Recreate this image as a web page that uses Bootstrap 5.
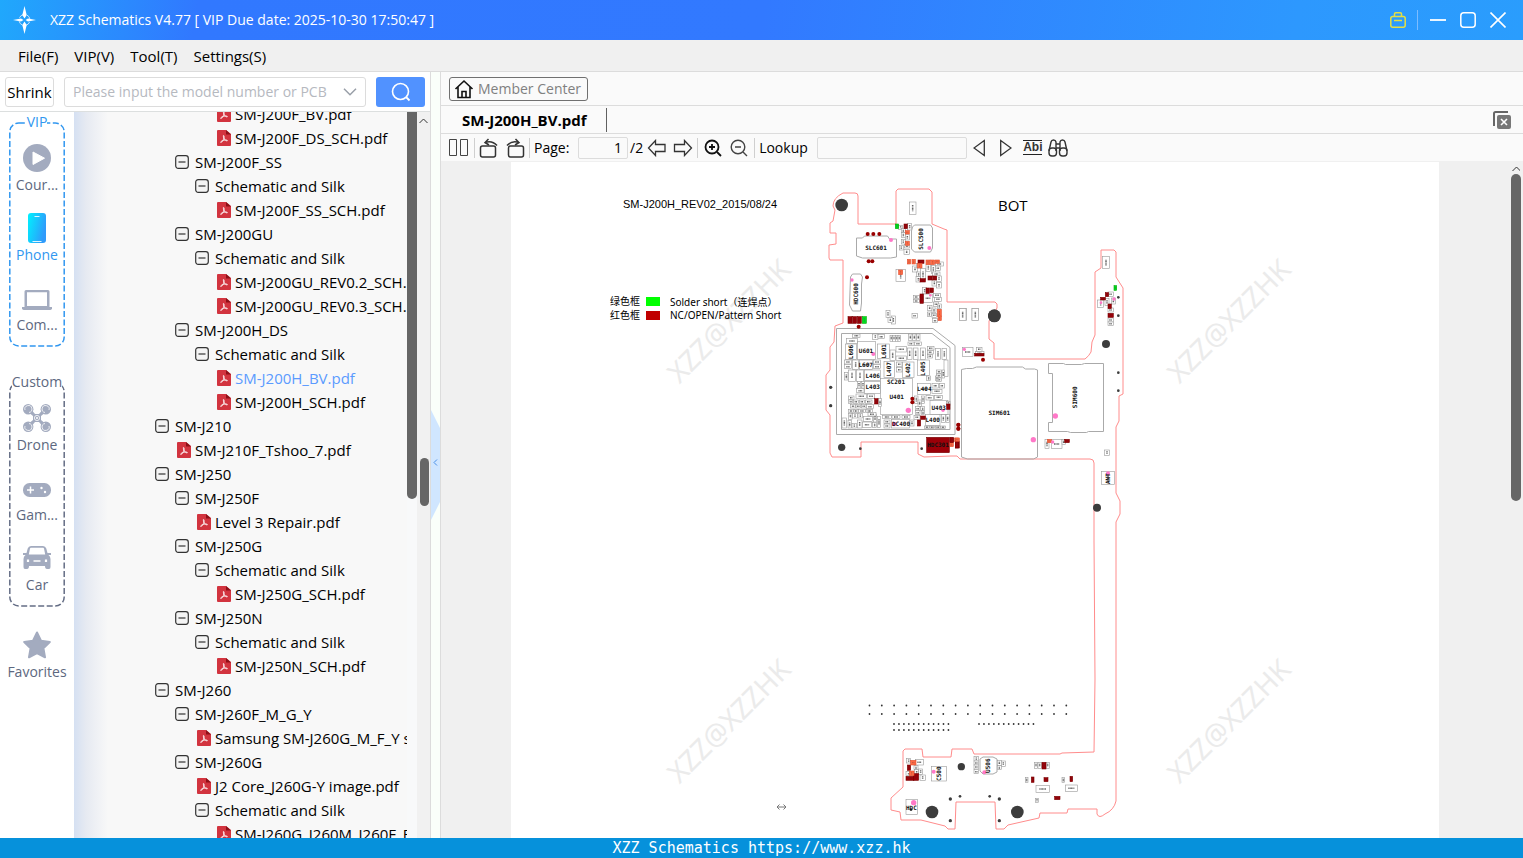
<!DOCTYPE html>
<html lang="en">
<head>
<meta charset="utf-8">
<meta name="viewport" content="width=device-width, initial-scale=1">
<title>XZZ Schematics</title>
<link href="https://cdn.jsdelivr.net/npm/bootstrap@5.3.0/dist/css/bootstrap.min.css" rel="stylesheet">
<style>
body{font-family:"Open Sans","Noto Sans","Noto Sans CJK SC",sans-serif;font-size:15px;line-height:24px;color:#000;background:#f0f0f0}
svg{display:block;flex:none}
button,input{font:inherit;color:inherit}
.plain{border:0;background:none;padding:0}
.titlebar{height:40px;background:linear-gradient(100deg,#20a8fc 0,#3178ff 13%,#3279ff 50%,#2d98fe 85%,#2a9dfd 100%);color:#fff;font-size:14px}
.wincontrols{gap:14px;padding:0 17px 0 12px;margin-left:11px;position:relative;border-left:0}
.menubar{height:32px;background:#f0f0f0;border-bottom:1px solid #dcdcdc;padding:0 18px;gap:16px}
.menubar a{color:#000;text-decoration:none}
.leftpane{width:431px;border-right:1px solid #dcdcdc}
.searchrow{height:40px;border-bottom:1px solid #dcdfdf;padding:0 5px}
.shrink{width:49px;height:30px;border:1px solid #dcdcdc;border-radius:3px;background:#fff;padding:0}
.combo{width:302px;height:30px;border:1px solid #dcdcdc;border-radius:3px;margin:0 10px}
.combo input{border:0;outline:0;background:none;min-width:0;padding:0 0 0 8px;font-size:14px}
.combo input::placeholder{color:#b6b9bf;opacity:1}
.find{width:49px;height:30px;background:#5192ff;border-radius:3px}
.sidenav{width:74px;background:#fff;color:#5d6880;padding:10px 9px 0;font-size:14px}
.group{position:relative;height:225px;padding-top:20px}
.group+.group{margin-top:35px}
.group .frame{position:absolute;inset:0;width:100%;height:100%}
.group-title{position:absolute;top:-12px;left:0;right:0;text-align:center}
.group-title span{background:#fff}
.vip{color:#3197f0}
.sidenav .item{position:relative;height:70px;display:flex;flex-direction:column;align-items:center;color:#5d6880;text-decoration:none;white-space:nowrap}
.item .glyph{height:31px;display:flex;align-items:center}
.sidenav .item.on{color:#3197f0}
.fav{padding-top:22px;margin:0 -9px}
.treebox{background:linear-gradient(90deg,#d5e0f2 0,#e6eaf2 12px,#f8f8f8 34px)}
.tree{margin:-10px 0 0;padding:0;list-style:none}
.tree li{height:24px;display:flex;align-items:center;white-space:nowrap;gap:6px}
.tree a{color:#000;text-decoration:none}
.tree .file{gap:4px}
.tree .sel a{color:#5b9bff}
.d1{padding-left:81px}.d2{padding-left:101px}.d3{padding-left:121px}
.file.d1{padding-left:103px}.file.d2{padding-left:123px}.file.d3{padding-left:143px}
.innerbar{width:10px}
.innerbar div{height:387px;background:#666;border-radius:0 0 5px 5px}
.outerbar{width:13px;background:#f1f1f1;padding:6px 0 0 2px}
.outerbar .thumb{width:9px;height:48px;background:#666;border-radius:5px;margin:334px 0 0 1px}
.splitter{width:9px;background:#fafffa;padding-top:338px}
.rightpane{border-left:1px solid #dcdcdc;background:#fafafa}
.row-a{height:34px;border-bottom:1px solid #dcdcdc;padding:0 8px}
.row-b{height:28px;border-bottom:1px solid #dcdcdc}
.row-c{height:27px;font-size:14px}
.member{height:24px;width:139px;border:1px solid #707070;border-radius:3px;background:none;color:#808080;padding:0 4px;line-height:20px;font-size:14px;white-space:nowrap}
.filetab{width:166px;height:24px;padding-left:21px;border-right:1px solid #606060;font-weight:700;text-align:left}
.tbox{height:22px;border:1px solid #dcdcdc;border-radius:2px;background:#fafafa;padding:0 5px;text-align:right}
.pagebox{width:50px}
.findbox{width:150px}
.row-c label{white-space:nowrap;width:38px}
.row-c label.wide{width:52px}
.g2{margin-left:2px}.g4{margin-left:4px}.g6{margin-left:6px}.g11{margin-left:11px}.g15{margin-left:15px}
.vr-line{width:1px;height:20px;background:#cfcfcf;flex:none}
.titlebar .vr-line{background:#7cbcff;margin-left:11px}
.titlebar .wincontrols{margin-left:0}
.abi{font:700 12px/13px "Liberation Sans",sans-serif;border-width:1px 0;border-style:solid;border-color:#222;background:none;color:#333;padding:0}
.viewer{background:#f0f0f0;padding:1px 0 0 70px}
.sheet{background:#fff}
.vbar{width:12px;padding-top:4px;margin-left:72px}
.vbar .thumb{width:10px;height:327px;border-radius:5px;background:#666;margin-top:2px}
.statusbar{height:20px;background:#0691db;color:#fff;font:15px/20px "DejaVu Sans Mono",monospace}
.wm{font:28px "Noto Sans",sans-serif;fill:#ebebeb}
.ref{font:6px "DejaVu Sans Mono",monospace;fill:#111;text-anchor:middle;font-weight:700}
.note{font:10px "Noto Sans","Noto Sans CJK SC",sans-serif}
</style>
</head>
<body class="vh-100 d-flex flex-column overflow-hidden">
<svg width="0" height="0" class="position-absolute" aria-hidden="true">
 <symbol id="minus" viewBox="0 0 14 14"><rect x=".7" y=".7" width="12.6" height="12.6" rx="2.5" fill="#f4f4f4" stroke="#333" stroke-width="1.2"/><path d="M3.5 7h7" stroke="#333" stroke-width="1.2"/></symbol>
 <symbol id="pdf" viewBox="0 0 14 16"><path d="M1 0h8l5 4v11q0 1-1 1H1q-1 0-1-1V1q0-1 1-1z" fill="#d2343f"/><path d="M9 0l5 4.500H9z" fill="#8d1119"/><path d="M6.500 5.500c1 0 .6 2.500-.1 4S4.300 13 3.700 12.400s1.500-1.800 3.500-2.200 3.400 0 3.200.5-1.900-.1-2.800-1.300-1.600-3.900-1.100-3.900z" fill="none" stroke="#fff" stroke-width=".9"/></symbol>
</svg>

<header class="titlebar d-flex align-items-center flex-shrink-0">
 <svg class="ms-2 me-2" width="34" height="34" viewBox="0 0 34 34"><g fill="none" stroke="#c9e6ff" stroke-width="1"><circle cx="16.500" cy="17" r="5.500" stroke-dasharray="5 3.600" stroke-dashoffset="-2"/></g><path d="M16.500 3l2.200 9-2.200 3.500-2.200-3.500zM16.500 31l2.200-9-2.200-3.500-2.200 3.500z" fill="#fff"/><path d="M5 17l8-1.500 2.500 1.500-2.500 1.500zM28 17l-8-1.500-2.500 1.500 2.500 1.500z" fill="#fff"/></svg>
 <span class="flex-grow-1">XZZ Schematics V4.77 [ VIP Due date: 2025-10-30 17:50:47 ]</span>
 <button class="plain" aria-label="Store"><svg width="16" height="16" viewBox="0 0 16 16" fill="none" stroke="#e4df43" stroke-width="1.500"><rect x=".8" y="4.500" width="14.400" height="10.700" rx="2"/><path d="M4.500 4V2q0-1.200 1.200-1.200h4.600q1.200 0 1.200 1.200v2M4 8.500h8"/></svg></button>
 <span class="vr-line"></span>
 <div class="wincontrols d-flex">
  <button class="plain" aria-label="Minimize"><svg width="16" height="16"><path d="M0 8h16" stroke="#fff" stroke-width="1.800"/></svg></button>
  <button class="plain" aria-label="Maximize"><svg width="16" height="16"><rect x=".8" y=".8" width="14.400" height="14.400" rx="3" fill="none" stroke="#fff" stroke-width="1.500"/></svg></button>
  <button class="plain" aria-label="Close"><svg width="16" height="16"><path d="M.5.5l15 15M15.500.5l-15 15" stroke="#fff" stroke-width="1.600"/></svg></button>
 </div>
</header>

<nav class="menubar d-flex align-items-center flex-shrink-0"><a href="#">File(F)</a><a href="#">VIP(V)</a><a href="#">Tool(T)</a><a href="#">Settings(S)</a></nav>

<main class="flex-grow-1 d-flex overflow-hidden">
 <section class="leftpane flex-shrink-0 d-flex flex-column bg-white">
  <form class="searchrow d-flex align-items-center flex-shrink-0">
   <button type="button" class="shrink">Shrink</button>
   <div class="combo d-flex align-items-center"><input class="flex-grow-1" aria-label="Model number" placeholder="Please input the model number or PCB"><svg class="mx-2" width="14" height="8" viewBox="0 0 14 8"><path d="M1 .7l6 6 6-6" fill="none" stroke="#999fa8" stroke-width="1.500"/></svg></div>
   <button type="button" class="find border-0 p-0 d-flex align-items-center justify-content-center" aria-label="Search"><svg width="20" height="20" viewBox="0 0 20 20"><circle cx="9.500" cy="9.500" r="8" fill="none" stroke="#fff" stroke-width="1.600"/><path d="M15 15l3.500 3.500" stroke="#fff" stroke-width="1.800"/></svg></button>
  </form>
  <div class="d-flex flex-grow-1 overflow-hidden">
   <nav class="sidenav flex-shrink-0">
    <div class="group vip">
     <svg class="frame"><rect x=".8" y="1" width="54.400" height="223" rx="9" fill="none" stroke="#3197f0" stroke-width="1.500" stroke-dasharray="6 2.500"/></svg>
     <div class="group-title"><span>VIP</span></div>
     <a class="item" href="#"><span class="glyph"><svg width="28" height="28" viewBox="0 0 28 28"><circle cx="14" cy="14" r="14" fill="#a3abbf"/><path d="M10 8l11.500 6.200L10 20.500z" fill="#fff" stroke="#fff" stroke-linejoin="round"/></svg></span><span>Cour...</span></a>
     <a class="item on" href="#"><span class="glyph"><svg width="18" height="30" viewBox="0 0 18 30"><defs><linearGradient id="ph" x1="0" x2="1" y1="0" y2=".4"><stop offset="0" stop-color="#00f2fe"/><stop offset="1" stop-color="#2f9bfb"/></linearGradient></defs><rect width="18" height="30" rx="3" fill="url(#ph)"/><path d="M6.500 3.500h5M4.500 28.500h9" stroke="#dff6ff" stroke-width="1.200"/></svg></span><span>Phone</span></a>
     <a class="item" href="#"><span class="glyph"><svg class="mt-1" width="30" height="20" viewBox="0 0 30 20"><path d="M4 0h22q1.500 0 1.500 1.500V17h-25V1.500Q2.500 0 4 0zM5 2.200V16h20V2.200z" fill="#a3abbf" fill-rule="evenodd"/><path d="M0 17h30v1.500q-.5 1.500-2 1.500H2q-1.500 0-2-1.500z" fill="#a3abbf"/></svg></span><span>Com...</span></a>
    </div>
    <div class="group">
     <svg class="frame"><rect x=".8" y="1" width="54.400" height="223" rx="9" fill="none" stroke="#646d85" stroke-width="1.500" stroke-dasharray="6 2.500"/></svg>
     <div class="group-title"><span>Custom</span></div>
     <a class="item" href="#"><span class="glyph"><svg width="28" height="28" viewBox="0 0 28 28"><g fill="#a3abbf"><circle cx="5.200" cy="5.200" r="5.200"/><circle cx="22.800" cy="5.200" r="5.200"/><circle cx="5.200" cy="22.800" r="5.200"/><circle cx="22.800" cy="22.800" r="5.200"/><path d="M7 4l5 6h4l5-6 3 3-6 5v4l6 5-3 3-5-6h-4l-5 6-3-3 6-5v-4L4 7z"/></g><g fill="none" stroke="#fff" stroke-width=".8"><circle cx="14" cy="14" r="2.600"/><path d="M2 6a3.500 3.500 0 1 1 4 2.500M26 6a3.500 3.500 0 1 0-4 2.500M2 22a3.500 3.500 0 1 0 4-2.500M26 22a3.500 3.500 0 1 1-4-2.500"/></g><circle cx="14" cy="14" r="1" fill="#fff"/></svg></span><span>Drone</span></a>
     <a class="item" href="#"><span class="glyph"><svg class="mt-1" width="28" height="14" viewBox="0 0 28 14"><rect width="28" height="14" rx="6.500" fill="#a3abbf"/><path d="M4 7h7M7.500 3.500v7" stroke="#fff" stroke-width="1.500"/><circle cx="18.500" cy="5" r="1.200" fill="#fff"/><circle cx="22" cy="9" r="1.200" fill="#fff"/></svg></span><span>Gam...</span></a>
     <a class="item" href="#"><span class="glyph"><svg width="28" height="23" viewBox="0 0 28 23"><path d="M8 0h12q2.500 0 3.300 2.500L24.500 7H28v2h-2.500q2 1.500 2 4v8q0 2-1.500 2h-2q-2 0-2-3H6q0 3-2 3H2q-1.500 0-1.500-2v-8q0-2.500 2-4H0V7h3.500l1.200-4.500Q5.500 0 8 0zM7 2.500L5.800 8.500h16.400L21 2.500q-.2-.8-1-.8H8q-.8 0-1 .8z" fill="#a3abbf" fill-rule="evenodd"/><path d="M5 13.500v2.500M23 13.500v2.500" stroke="#fff" stroke-width="2.200"/><path d="M10.500 15h7" stroke="#fff" stroke-width="1.500"/></svg></span><span>Car</span></a>
    </div>
    <div class="fav"><a class="item" href="#"><span class="glyph"><svg width="28" height="28" viewBox="0 0 28 28"><path d="M14 1.500l4 8.200 8.800 1.300-6.400 6.300 1.600 9L14 22l-8 4.300 1.600-9L1.200 11 10 9.700z" fill="#a3abbf" stroke="#a3abbf" stroke-width="2" stroke-linejoin="round"/></svg></span><span>Favorites</span></a></div>
   </nav>
   <div class="treebox flex-grow-1 overflow-hidden">
    <ul class="tree" id="tree"></ul>
   </div>
   <div class="innerbar flex-shrink-0 bg-light"><div></div></div>
   <div class="outerbar flex-shrink-0"><svg width="9" height="6"><path d="M.5 5l4-4 4 4" fill="none" stroke="#333"/></svg><div class="thumb"></div></div>
  </div>
 </section>
 <div class="splitter flex-shrink-0"><svg width="9" height="110" viewBox="0 -40 9 110"><path d="M0-40L9-22V52L0 70z" fill="#d0e6ff"/><path d="M6 9.500L3 12.500l3 3" fill="none" stroke="#4a90e8"/></svg></div>

 <section class="rightpane flex-grow-1 d-flex flex-column overflow-hidden">
  <div class="row-a d-flex align-items-center flex-shrink-0"><button class="member d-flex align-items-center gap-1"><svg width="20" height="20" viewBox="0 0 20 20" fill="none" stroke="#111" stroke-width="1.600"><path d="M1.500 10L10 2l8.500 8M4 8v10.500h12V8M8 18v-5.500h4V18"/></svg>Member Center</button></div>
  <div class="row-b d-flex align-items-center justify-content-between flex-shrink-0"><button class="filetab border-start-0 border-top-0 border-bottom-0 bg-transparent py-0">SM-J200H_BV.pdf</button>
   <button class="plain me-2" aria-label="Close all"><svg class="me-1" width="18" height="18" viewBox="0 0 18 18"><path d="M1 15V2.500Q1 1 2.500 1H15" fill="none" stroke="#666" stroke-width="2"/><rect x="4" y="4" width="14" height="14" rx="2" fill="#777"/><path d="M8 8l6 6M14 8l-6 6" stroke="#fff" stroke-width="1.600"/></svg></button></div>
  <div class="row-c d-flex align-items-center flex-shrink-0 ps-2">
   <button class="plain" aria-label="Two pages"><svg width="19" height="18" fill="none" stroke="#444"><path d="M.5.5h7v16h-7zM11.500.5h7v16h-7z"/></svg></button>
   <span class="vr-line g6"></span>
   <button class="plain g4" aria-label="Rotate left"><svg width="20" height="20" viewBox="0 0 20 20" fill="none" stroke="#333" stroke-width="1.500"><rect x="1.500" y="8" width="15" height="11" rx="2"/><path d="M6 4.500q7-2.500 12 3M9.500 1L6 4.500 10 7"/></svg></button>
   <button class="plain g6" aria-label="Rotate right"><svg width="20" height="20" viewBox="0 0 20 20" fill="none" stroke="#333" stroke-width="1.500"><rect x="3.500" y="8" width="15" height="11" rx="2"/><path d="M14 4.500Q7 2 2 7.500M10.500 1L14 4.500 10 7"/></svg></button>
   <span class="vr-line g4"></span>
   <label class="g4" for="pg">Page:</label><input id="pg" class="tbox pagebox g6" value="1"><span class="g2">/2</span>
   <button class="plain g4" aria-label="Previous page"><svg width="20" height="18" viewBox="0 0 20 18"><path d="M1.500 9l7-7.500V5.500h9.500v7H8.500v4z" fill="none" stroke="#333" stroke-width="1.300"/></svg></button>
   <button class="plain g6" aria-label="Next page"><svg width="20" height="18" viewBox="0 0 20 18"><path d="M18.500 9l-7-7.500V5.500H1.500v7h10v4z" fill="none" stroke="#333" stroke-width="1.300"/></svg></button>
   <span class="vr-line g4"></span>
   <button class="plain g6" aria-label="Zoom in"><svg width="18" height="18" viewBox="0 0 18 18" fill="none" stroke="#111" stroke-width="1.800"><circle cx="8" cy="8" r="6.500"/><path d="M13 13l4 4M5 8h6M8 5v6"/></svg></button>
   <button class="plain ms-2" aria-label="Zoom out"><svg width="18" height="18" viewBox="0 0 18 18" fill="none" stroke="#444" stroke-width="1.400"><circle cx="8" cy="8" r="6.800"/><path d="M13 13l4 4M5 8h6"/></svg></button>
   <span class="vr-line g6"></span>
   <label class="wide g4" for="lk">Lookup</label><input id="lk" class="tbox findbox text-start g6">
   <button class="plain g6" aria-label="Find previous"><svg width="12" height="18" viewBox="0 0 12 18"><path d="M11.300 1.500v15L1 9z" fill="none" stroke="#333" stroke-width="1.300"/></svg></button>
   <button class="plain g15" aria-label="Find next"><svg width="12" height="18" viewBox="0 0 12 18"><path d="M.7 1.500v15L11 9z" fill="none" stroke="#333" stroke-width="1.300"/></svg></button>
   <button class="abi g11">Abi</button>
   <button class="plain g6" aria-label="Find"><svg width="20" height="18" viewBox="0 0 20 18" fill="none" stroke="#333" stroke-width="1.400"><path d="M1 12L3 3q.5-2 2.500-2T8 3v9M19 12L17 3q-.5-2-2.500-2T12 3v9M8 5h4M8 9h4"/><rect x="1" y="9" width="7.500" height="8" rx="3"/><rect x="11.500" y="9" width="7.500" height="8" rx="3"/></svg></button>
  </div>
  <div class="viewer d-flex flex-grow-1 overflow-hidden">
   <div class="sheet flex-grow-1 overflow-hidden">
    <svg id="board" class="w-100" viewBox="511 162 928 676" role="img" aria-label="Board view">
     <g class="wm" text-anchor="middle"><text transform="translate(736 328) rotate(-45)">XZZ@XZZHK</text><text transform="translate(1236 328) rotate(-45)">XZZ@XZZHK</text><text transform="translate(736 728) rotate(-45)">XZZ@XZZHK</text><text transform="translate(1236 728) rotate(-45)">XZZ@XZZHK</text></g>
     <text x="623" y="208" style="font:11px 'Liberation Sans',sans-serif">SM-J200H_REV02_2015/08/24</text>
     <text x="998" y="211" style="font:15px 'Liberation Sans Narrow','Open Sans',sans-serif">BOT</text>
     <g class="note"><text x="610" y="305">绿色框</text><text x="610" y="319">红色框</text><text x="670" y="306">Solder short（连焊点）</text><text x="670" y="319">NC/OPEN/Pattern Short</text></g>
     <path d="M646 297h14v9h-14z" fill="#0f0"/><path d="M646 311h14v9h-14z" fill="#c00000"/>
     <g fill="none" stroke="#ff8c8c" stroke-width="1">
      <path d="M858 224V196q0-3-3-3H843Q833 198 833 206l2 4-2 11-3 2v10h6v11l-7 1v13l1 2h13v63l-8 3-1 16-4 5v23l-4 5v35l4 5v38l2 4h29v-15h57v12l6 3 27-1h6l3 3h130q4 0 4 4v78l1 138-1 73-32 1-2 1h-86l-2-5h-20l-1 8h-28l-1-8h-17l-2 2v36l-12 11v12l9 2 1 8h20l24 6 3 3h7l1-27h39l1 27h8l4-4 31-7 1-5h27l1-4h29v5q2 5 8 0 9-4 11-13V522l4-8v-13l-4-8v-66l3-6v-25l4-2V288l-7-11V252l-2-2h-13v18l-6 4v63l-3 7-1 10q-2 4-6 7h-91v-16l-5-4v-18l8-13v-4l-2-2H947V230l-3-1-12-5V192l-3-3h-31l-2 2v33z"/>
     </g>
     <g fill="none" stroke="#aaa" stroke-width="1">
      <path d="M836.500 328.500H933l22 17v89H836.500zM841.500 333.500H932l18 14v82H841.500z"/>
      <path d="M961.500 369.500l5-1h6l4-1.500h46l3 2h9l3 1v87l-4 2h-66l-6-2zM1048.500 363.500h15l2 1h16l3-1h19v68h-15l-2 1h-16l-3-1h-19v-9h4v-49h-4z"/>
      <path d="M856.500 241v-3h6l2-2h23l2 3h7v18l-6 1h-28l-6-2z" fill="#fff"/>
      <path d="M912.500 227l2-2h16l2 3v20l-2 4h-16l-3-3v-18z" fill="#fff"/>
      <path d="M850.500 277l2-3h8l2 3-1 7v19l-1 8h-8l-3-6z" fill="#fff"/>
      <path d="M980 759l3-2h10l4 2v13l-4 2h-10l-3-3z" fill="#fff"/>
     </g>
     <g id="parts"></g>
    </svg>
   </div>
   <div class="vbar flex-shrink-0"><svg width="9" height="6"><path d="M1.500 5l4-4 4 4" fill="none" stroke="#333"/></svg><div class="thumb"></div></div>
  </div>
 </section>
</main>
<footer class="statusbar text-center flex-shrink-0">XZZ Schematics https://www.xzz.hk</footer>
<script src="https://cdn.jsdelivr.net/npm/bootstrap@5.3.0/dist/js/bootstrap.bundle.min.js"></script>
<script>
// File tree: depth, kind (f = file, s = selected file, d = folder), name
document.getElementById('tree').innerHTML = `3f SM-J200F_BV.pdf
3f SM-J200F_DS_SCH.pdf
2d SM-J200F_SS
3d Schematic and Silk
3f SM-J200F_SS_SCH.pdf
2d SM-J200GU
3d Schematic and Silk
3f SM-J200GU_REV0.2_SCH.pdf
3f SM-J200GU_REV0.3_SCH.pdf
2d SM-J200H_DS
3d Schematic and Silk
3s SM-J200H_BV.pdf
3f SM-J200H_SCH.pdf
1d SM-J210
1f SM-J210F_Tshoo_7.pdf
1d SM-J250
2d SM-J250F
2f Level 3 Repair.pdf
2d SM-J250G
3d Schematic and Silk
3f SM-J250G_SCH.pdf
2d SM-J250N
3d Schematic and Silk
3f SM-J250N_SCH.pdf
1d SM-J260
2d SM-J260F_M_G_Y
2f Samsung SM-J260G_M_F_Y schematic.pdf
2d SM-J260G
2f J2 Core_J260G-Y image.pdf
3d Schematic and Silk
3f SM-J260G_J260M_J260F_BV.pdf`.split('\n').map(r => {
  const k = r[1], name = r.slice(3);
  return k === 'd'
    ? `<li class="d${r[0]}"><button class="plain" aria-label="Collapse ${name}"><svg width="14" height="14"><use href="#minus"/></svg></button><span>${name}</span></li>`
    : `<li class="file d${r[0]}${k === 's' ? ' sel' : ''}"><svg width="14" height="16"><use href="#pdf"/></svg><a href="#">${name}</a></li>`;
}).join('');

// Board components. Coordinates are in thirds of a board unit from each area's origin.
let out = '';
const fills = {w: '#fff', r: '#9b0008', o: '#ff6a45', g: '#00e020'};
const edges = {w: '#999', r: '#700', o: '#e05030', g: '#0a0'};
function area(ox, oy, list) {
  list.trim().split('\n').forEach(line => {
    const [k, ...v] = line.trim().split(' ');
    if (k === 'c') { // filled circle: colour, then x,y,r
      v.slice(1).forEach(p => { const [x, y, r] = p.split(',').map(Number);
        out += `<circle cx="${ox + x / 3}" cy="${oy + y / 3}" r="${r / 3}" fill="${v[0]}"/>`; });
    } else if (k === 't') { // reference: x,y,name,vertical
      v.forEach(p => { const [x, y, s, rot] = p.split(',');
        out += `<text class="ref" transform="translate(${ox + x / 3 + (rot ? 2 : 0)} ${oy + y / 3 + (rot ? 0 : 2)})${rot ? ' rotate(-90)' : ''}">${s}</text>`; });
    } else v.forEach(p => { const [x, y, w, h] = p.split(',').map(Number);
        const X = ox + x / 3, Y = oy + y / 3, W = w / 3, H = h / 3, wide = W > H;
        out += `<rect x="${X}" y="${Y}" width="${W}" height="${H}" fill="${fills[k]}" stroke="${edges[k]}" stroke-width=".6"/>`;
        if (Math.max(W, H) < 14) out += `<path d="${wide ? `M${X + W * .25} ${Y + H / 2}h${W * .5}` : `M${X + W / 2} ${Y + H * .25}v${H * .5}`}" stroke="#333" stroke-width="${k === 'w' ? 1.5 : .8}" stroke-dasharray="1 .4" opacity="${k === 'w' ? .75 : .4}"/>`; });
  });
}
area(820, 180, `
w 268,66,20,37 228,268,28,37 420,385,20,36 456,385,20,36 276,400,16,14 214,408,12,24 198,392,12,20 204,412,14,16
w 236,136,12,12 263,130,12,20 244,146,12,12 244,158,12,14 256,164,12,16 244,178,12,14 238,196,12,14 252,208,16,16 254,194,14,10
w 278,258,14,18 290,250,12,14 290,276,12,14 288,290,14,16 302,266,14,34 318,252,14,22 334,256,12,24 346,246,24,12 346,258,16,14 338,276,22,12 350,288,14,16 336,300,14,18 350,308,14,16 308,322,12,20 280,346,18,10 280,358,18,10 310,342,28,26 340,340,22,12 344,352,20,12 340,366,16,14 322,376,14,16 336,384,12,14 322,396,12,14 336,400,14,12 352,372,12,14 338,416,14,12
r 84,410,12,20 98,410,12,20 112,410,12,20 252,132,10,14 294,240,18,10 300,296,16,10 324,288,12,12 338,288,12,12 318,324,10,16 330,324,10,14 300,342,10,28
g 226,132,10,14 127,410,12,20
o 236,270,12,14 256,152,12,10 256,184,12,12 262,238,10,14 276,238,10,14 292,250,14,14 318,240,12,14 332,240,12,14 346,240,12,10 352,388,12,22 354,408,10,14
c #900 143,162,6 160,162,6 178,162,6 146,244,6 157,244,6 141,292,6 116,440,6
c #ff78c8 213,180,6 328,204,6 96,300,5 331,346,4
c #3c3c3c 65,75,19 523,408,19
t 168,203,SLC601 304,177,SLC500,1 107,342,HDC600,1
`);
area(820, 320, `
w 76,72,34,46 112,64,54,54 172,72,36,44 118,120,40,28 192,124,32,48 248,126,34,46 292,120,36,46 134,150,48,32 134,184,48,36 182,176,96,108 292,190,40,34 330,242,54,42 316,284,44,32 214,298,54,26
w 80,56,32,14 98,42,22,10 158,42,16,16 174,44,20,12 210,46,8,18 218,46,8,18 226,46,8,18 234,46,8,18 266,42,10,20 278,42,10,20 290,42,10,20 264,66,18,10 284,66,20,10 228,80,32,16 228,108,32,14 262,84,14,34 280,84,14,34 302,84,14,34 322,80,20,10 322,92,18,10 322,104,16,10 346,86,16,32 366,86,14,32 372,120,12,50
w 74,120,20,12 74,134,20,12 98,120,18,28 160,120,22,12 160,134,22,12 210,90,16,32 230,126,16,14 230,142,16,14 74,158,10,22 86,150,20,34 110,150,20,34 112,184,10,20 124,184,10,20 110,206,22,12 108,222,32,14 142,222,22,14 350,150,14,10 350,162,14,10 350,174,14,10 366,150,8,24 336,190,20,14 358,190,16,14 336,208,30,12 346,168,10,14 320,168,12,14
w 86,228,16,10 86,240,12,10 100,240,16,10 118,240,16,10 136,240,20,10 92,254,14,10 108,254,14,10 124,254,14,10 140,254,20,12 86,268,14,10 102,268,12,10 116,268,20,10 138,268,20,10 86,280,10,18 98,280,14,14 114,280,14,14 130,290,28,14 160,282,10,24 172,290,10,32 66,294,14,30 84,302,10,22 96,310,14,14 112,300,14,24 128,306,26,16 158,308,12,14 176,236,8,24 144,278,24,10
w 192,300,18,10 192,312,18,12 188,286,26,10 216,286,24,10 246,286,24,10 270,300,12,18 282,286,18,12 284,228,10,22 294,240,10,20 304,228,10,22 318,226,22,14 344,226,24,12 286,260,14,12 302,260,12,12 286,272,14,12 304,272,10,12 364,284,12,24 378,284,10,24 314,318,14,8 330,318,14,8 346,318,14,8 362,318,14,8 380,244,10,12
r 320,352,68,46 164,236,10,16 302,288,14,10 292,300,10,18 380,252,10,16 390,354,10,12 406,364,12,20
o 390,368,10,12 404,354,12,10
c #900 277,236,6 277,247,6 415,315,6 415,326,6
c #ff78c8 160,102,6 265,271,8 222,312,7 369,271,5
c #3c3c3c 65,382,11 32,202,5 32,257,5 121,386,4 305,386,4
t 138,92,U601 93,96,L606,1 191,94,L601,1 137,134,L607 207,148,L407,1 265,150,L402,1 310,146,L405,1 158,167,L406 158,202,L403 228,186,SC201 230,230,U401 313,208,L404 356,264,U403 338,301,L400 243,312,DC400 354,376,HDC301
`);
area(950, 240, `
w 458,50,20,36 28,206,20,36 66,206,20,36 37,322,32,28 76,334,26,12 80,322,16,12 443,180,18,22 465,176,12,20 474,156,16,14 484,174,12,18 474,204,16,12 474,234,16,12 474,246,16,10 463,630,16,16 454,694,40,40 285,598,12,28 304,598,32,28 336,598,10,16
r 74,340,28,8 452,172,14,8 466,158,10,12 474,192,10,14 474,220,16,12 344,598,14,10 0,592,10,16 16,600,10,24
o 16,594,12,10 292,598,12,10
g 492,137,8,14
c #900 99,359,6 25,554,6 25,566,6
c #ff78c8 43,328,5 316,528,8 250,599,8 492,177,5 453,188,4 474,700,6 308,606,5
c #3c3c3c 133,227,19 468,312,12 441,803,12 505,172,4 505,227,4 505,398,4 505,452,4
t 148,520,SIM601 376,472,SIM600,1 474,716,ANT,1
`);
area(860, 695, `
w 166,194,24,16 140,190,12,14 162,212,12,12 164,224,12,16 176,222,12,16 138,230,22,12 180,240,16,16 214,214,46,44 342,184,14,14 342,198,14,12 342,210,14,12 342,224,14,12 412,196,12,16 424,198,12,16 412,212,12,12 524,202,8,18 534,202,10,18 558,202,10,18 496,248,8,14 606,248,8,14 528,272,40,20 616,270,36,20 526,310,10,12 138,314,34,44
r 142,210,10,16 138,244,24,12 160,236,16,20 546,202,12,20 514,246,8,16 630,244,8,16 584,304,16,10 552,248,12,12
o 152,196,16,14 148,228,14,14
c #ff78c8 221,230,6 373,232,6 161,323,8
c #3c3c3c 304,215,11 216,351,19 472,351,19 300,304,4 389,304,4 271,312,5 418,312,5 271,377,5 418,377,5 153,344,4
t 385,212,U506,1 236,236,C500,1 154,338,HDC
`);
// Rows of test points
const dots = (ox, y, step, n) => { for (let i = 0; i < n; i++) out += `<circle cx="${ox + i * step}" cy="${y}" r=".9" fill="#333"/>`; };
dots(869.500, 705.500, 12.300, 17); dots(869.500, 714, 12.300, 17);
dots(894, 724, 4.950, 12); dots(894, 730, 4.950, 12); dots(979, 724, 4.950, 12);
out += '<path d="M777 807h9M779.500 804.500l-2.500 2.500 2.500 2.500M783.500 804.500l2.500 2.500-2.500 2.500" fill="none" stroke="#777"/>';
document.getElementById('parts').innerHTML = out;
</script>
</body>
</html>
